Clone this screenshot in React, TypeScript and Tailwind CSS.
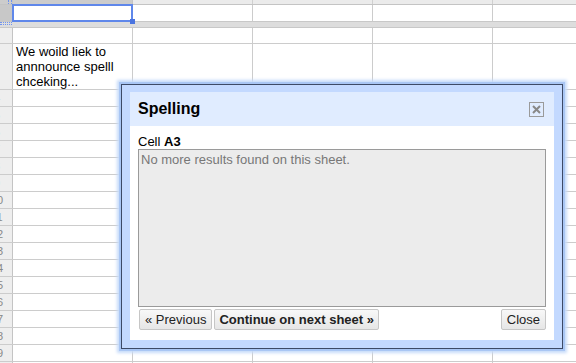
import React from "react";

const COLS = [0, 1, 2, 3, 4];

function RowHeader({ n, selected }: { n?: number; selected?: boolean }) {
  return (
    <div
      className={
        "w-[13px] shrink-0 overflow-hidden border-r border-[#c4c4c4] " +
        (selected ? "bg-[#c8c8c8]" : "bg-[#eeeeee]")
      }
    >
      {n !== undefined && (
        <div className="ml-[-13px] w-[20px] text-center text-[11px] leading-[16px] text-[#888]">
          {n}
        </div>
      )}
    </div>
  );
}

function GridRow({
  n,
  h,
  children,
}: {
  n?: number;
  h: string;
  children?: React.ReactNode;
}) {
  return (
    <div className={"flex shrink-0 border-b border-[#cccccc] " + h}>
      <RowHeader n={n} />
      {COLS.map((c) => (
        <div
          key={c}
          className="w-[120px] shrink-0 border-r border-[#cccccc] overflow-visible"
        >
          {c === 0 ? children : null}
        </div>
      ))}
    </div>
  );
}

export default function App() {
  const rows = Array.from({ length: 17 }, (_, i) => i + 4);
  return (
    <div className="relative w-[576px] h-[363px] overflow-hidden bg-white font-['Liberation_Sans',Arial,sans-serif] text-black">
      {/* column header strip */}
      <div className="flex h-[5px] border-b border-[#c4c4c4]">
        <div className="relative w-[13px] shrink-0 bg-[#cccccc] border-r border-[#c4c4c4]">
          <div className="absolute left-[8px] top-0 h-[4px] w-[4px] border-x border-dotted border-[#6f93ee]" />
        </div>
        <div className="w-[120px] shrink-0 bg-[#cccccc] border-r border-[#c4c4c4]" />
        {[1, 2, 3, 4].map((c) => (
          <div
            key={c}
            className="w-[120px] shrink-0 bg-[#ebebeb] border-r border-[#d0d0d0]"
          />
        ))}
      </div>

      {/* row 1 (selected) */}
      <div className="flex h-[16px]">
        <RowHeader selected />
        {COLS.map((c) => (
          <div
            key={c}
            className="relative w-[120px] shrink-0 border-r border-[#cccccc]"
          >
            {c === 0 && (
              <>
                <div className="absolute left-[-1px] top-[-1px] z-10 h-[18px] w-[121px] border-2 border-[#5f87ea]" />
                <div className="absolute left-[117px] top-[14px] z-20 h-[5px] w-[5px] bg-[#4a74e0]" />
              </>
            )}
          </div>
        ))}
      </div>

      {/* frozen bar */}
      <div className="flex h-[7px] border-y border-[#c8c8c8] bg-[#dddddd]">
        <div className="w-[13px] shrink-0">
          <div className="h-[3px] w-[12px] border-y border-dotted border-[#6f93ee]" />
        </div>
      </div>

      {/* row 2 */}
      <GridRow h="h-[16px]" />

      {/* row 3 */}
      <GridRow h="h-[46px]">
        <div className="pl-[3px] pr-[2px] text-[13px] leading-[15px] whitespace-normal">
          We woild liek to annnounce spelll chceking...
        </div>
      </GridRow>

      {rows.map((n) => (
        <GridRow key={n} n={n} h="h-[17px]" />
      ))}

      {/* Spelling dialog */}
      <div className="absolute left-[121px] top-[84px] z-30 h-[265px] w-[442px] border border-[#3d4a66] bg-[#c3d9ff] px-[8px] pt-[7px] pb-[8px] shadow-[0_0_0_2px_#a9c6f4,0_0_3px_4px_#c6dbfa]">
        <div className="flex h-full flex-col bg-white">
          <div className="flex h-[34px] shrink-0 items-center justify-between bg-[#e0ecff] pl-[8px] pr-[10px]">
            <span className="text-[16px] font-bold leading-[18px]">Spelling</span>
            <div className="flex h-[15px] w-[15px] items-center justify-center border border-[#9a9a9a] bg-[#e0ecff]">
              <svg width="13" height="13" viewBox="0 0 13 13">
                <path
                  d="M3 3 L10 10 M10 3 L3 10"
                  stroke="#888"
                  strokeWidth="2"
                  fill="none"
                />
              </svg>
            </div>
          </div>
          <div className="flex flex-1 flex-col px-[8px]">
            <div className="pt-[8px] text-[13px] leading-[15px]">
              Cell <b>A3</b>
            </div>
            <div className="h-[158px] shrink-0 border border-[#9a9a9a] bg-[#ececec] px-[2px] pt-[2px] text-[13px] leading-[15px] text-[#777]">
              No more results found on this sheet.
            </div>
            <div className="mt-[2px] flex h-[21px] items-stretch pl-[1px]">
              <button className="rounded-[2px] border border-[#c6c6c6] bg-gradient-to-b from-[#f8f8f8] to-[#e6e6e6] px-[5px] text-[13px] leading-[19px] text-[#222]">
                « Previous
              </button>
              <button className="ml-[2px] rounded-[2px] border border-[#c6c6c6] bg-gradient-to-b from-[#f8f8f8] to-[#e6e6e6] px-[4px] text-[13px] font-bold leading-[19px] text-[#222]">
                Continue on next sheet »
              </button>
              <div className="flex-1" />
              <button className="rounded-[2px] border border-[#c6c6c6] bg-gradient-to-b from-[#f8f8f8] to-[#e6e6e6] px-[5px] text-[13px] leading-[19px] text-[#222]">
                Close
              </button>
            </div>
          </div>
        </div>
      </div>
    </div>
  );
}
